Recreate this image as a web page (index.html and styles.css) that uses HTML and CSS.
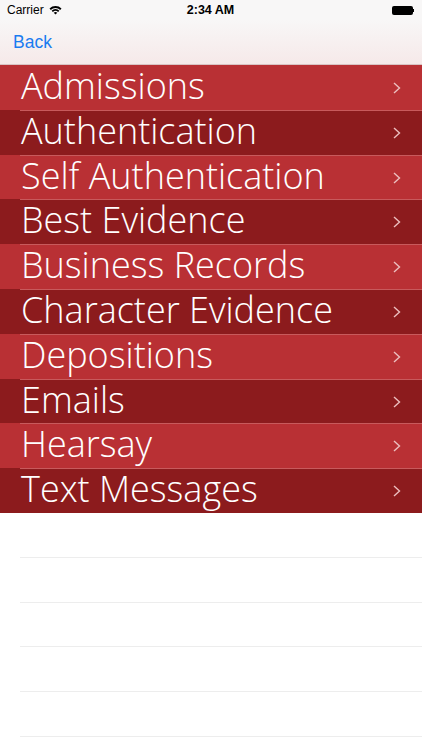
FILE: index.html
```html
<!DOCTYPE html>
<html lang="en">
<head>
    <meta charset="UTF-8">
    <meta name="viewport" content="width=device-width, initial-scale=1.0">
    <title>Evidence Topics</title>
    <link rel="stylesheet" href="styles.css">
</head>
<body>
    <div class="status-bar">
        <div class="carrier">
            Carrier
            <svg class="wifi" width="13" height="10" viewBox="0 0 13 10">
                <path d="M0.5 3.6 A8.5 8.5 0 0 1 12.5 3.6 L11.2 4.9 A6.7 6.7 0 0 0 1.8 4.9 Z" fill="#000"/>
                <path d="M2.6 5.7 A5.6 5.6 0 0 1 10.4 5.7 L9.1 7 A3.8 3.8 0 0 0 3.9 7 Z" fill="#000"/>
                <path d="M4.7 7.8 A2.6 2.6 0 0 1 8.3 7.8 L6.5 9.6 Z" fill="#000"/>
            </svg>
        </div>
        <div class="clock">2:34 AM</div>
        <div class="battery"><span class="battery-fill"></span><span class="battery-nub"></span></div>
    </div>

    <div class="nav-bar">
        <a class="back" href="#">Back</a>
    </div>

    <ul class="topic-list">
        <li class="topic">Admissions<svg class="chevron" width="8" height="12" viewBox="0 0 8 12"><polyline points="1,1 6.5,6 1,11"/></svg></li>
        <li class="topic dark">Authentication<svg class="chevron" width="8" height="12" viewBox="0 0 8 12"><polyline points="1,1 6.5,6 1,11"/></svg></li>
        <li class="topic">Self Authentication<svg class="chevron" width="8" height="12" viewBox="0 0 8 12"><polyline points="1,1 6.5,6 1,11"/></svg></li>
        <li class="topic dark">Best Evidence<svg class="chevron" width="8" height="12" viewBox="0 0 8 12"><polyline points="1,1 6.5,6 1,11"/></svg></li>
        <li class="topic">Business Records<svg class="chevron" width="8" height="12" viewBox="0 0 8 12"><polyline points="1,1 6.5,6 1,11"/></svg></li>
        <li class="topic dark">Character Evidence<svg class="chevron" width="8" height="12" viewBox="0 0 8 12"><polyline points="1,1 6.5,6 1,11"/></svg></li>
        <li class="topic">Depositions<svg class="chevron" width="8" height="12" viewBox="0 0 8 12"><polyline points="1,1 6.5,6 1,11"/></svg></li>
        <li class="topic dark">Emails<svg class="chevron" width="8" height="12" viewBox="0 0 8 12"><polyline points="1,1 6.5,6 1,11"/></svg></li>
        <li class="topic">Hearsay<svg class="chevron" width="8" height="12" viewBox="0 0 8 12"><polyline points="1,1 6.5,6 1,11"/></svg></li>
        <li class="topic dark">Text Messages<svg class="chevron" width="8" height="12" viewBox="0 0 8 12"><polyline points="1,1 6.5,6 1,11"/></svg></li>
    </ul>

    <div class="empty-rows">
        <div class="empty-row"></div>
        <div class="empty-row"></div>
        <div class="empty-row"></div>
        <div class="empty-row"></div>
        <div class="empty-row"></div>
    </div>
</body>
</html>
```

FILE: styles.css
```css
body {
    margin: 0;
    padding: 0;
    width: 422px;
    height: 750px;
    overflow: hidden;
    background-color: #fff;
    font-family: "Liberation Sans", Arial, sans-serif;
}

.status-bar {
    height: 20px;
    display: flex;
    align-items: center;
    justify-content: space-between;
    padding: 0 8px 0 7px;
    background-color: #f8f7f7;
    font-size: 12px;
    color: #000;
}

.carrier {
    flex: 1;
    display: flex;
    align-items: center;
    gap: 5px;
}

.clock {
    font-weight: bold;
    font-size: 12.5px;
}

.battery {
    flex: 1;
    display: flex;
    justify-content: flex-end;
    align-items: center;
}

.battery-fill {
    width: 21px;
    height: 9px;
    background-color: #000;
    border-radius: 2px;
}

.battery-nub {
    width: 1.5px;
    height: 3px;
    background-color: #000;
}

.nav-bar {
    height: 45px;
    display: flex;
    align-items: center;
    padding-left: 13px;
    background: linear-gradient(#f8f7f7, #f6e9e9);
    border-bottom: 1px solid #d9c4c4;
    box-sizing: border-box;
}

.back {
    color: #1a7cf0;
    text-decoration: none;
    font-size: 17.5px;
    margin-top: 1px;
}

.topic-list {
    list-style: none;
    margin: 0;
    padding: 0;
}

.topic {
    position: relative;
    height: 44.8px;
    box-sizing: border-box;
    display: flex;
    align-items: flex-start;
    padding-left: 21px;
    background-color: #b93034;
    color: #fff;
    font-family: "Open Sans", sans-serif;
    font-weight: 300;
    font-size: 36px;
    line-height: 42px;
    white-space: nowrap;
}

.topic.dark {
    background-color: #8c1b1d;
}

.topic + .topic::before {
    content: "";
    position: absolute;
    left: 20px;
    right: 0;
    top: 0;
    height: 1px;
    background-color: #c85a5c;
}

.chevron {
    margin-left: auto;
    margin-right: 21px;
    margin-top: 17px;
    fill: none;
    stroke: #ecbfbf;
    stroke-width: 1.4;
}

.empty-row {
    height: 44.8px;
    margin-left: 20px;
    border-bottom: 1px solid #ededed;
    box-sizing: border-box;
}
```
